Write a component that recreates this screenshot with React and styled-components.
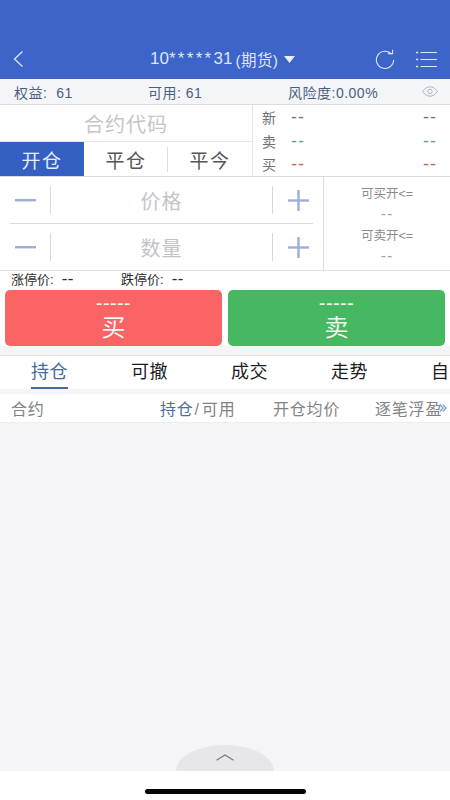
import React from 'react';
import styled, { createGlobalStyle } from 'styled-components';

const GlobalStyle = createGlobalStyle`
  html, body {
    margin: 0;
    padding: 0;
    background: #fff;
  }
  * {
    box-sizing: border-box;
  }
`;

const Page = styled.div`
  width: 450px;
  height: 800px;
  overflow: hidden;
  display: flex;
  flex-direction: column;
  font-family: 'Liberation Sans', 'Noto Sans CJK SC', sans-serif;
  background: #fff;
`;

const Header = styled.div`
  height: 79px;
  flex: none;
  background: #3c64c9;
  display: flex;
  align-items: flex-start;
  padding: 47px 13px 0 12px;
  color: #dfe6f6;
`;

const BackIcon = styled.svg`
  margin-top: 3px;
  flex: none;
`;

const HeaderTitle = styled.div`
  display: flex;
  align-items: center;
  font-size: 17px;
  height: 24px;
  margin-left: 125px;
  white-space: nowrap;
  small {
    font-size: 15.5px;
    letter-spacing: 0.4px;
    margin-left: 3px;
    margin-right: 6px;
  }
`;

const Stars = styled.span`
  letter-spacing: 2.3px;
`;

const HeaderIcons = styled.div`
  margin-left: auto;
  height: 24px;
  display: flex;
  align-items: center;
  gap: 21px;
`;

const InfoBar = styled.div`
  height: 26px;
  flex: none;
  background: #f4f5f9;
  border-bottom: 1px solid #dcdde2;
  display: grid;
  grid-template-columns: 134px 140px 1fr 24px;
  align-items: center;
  padding: 0 4px 0 14px;
  font-size: 14px;
  letter-spacing: 0.5px;
  color: #4a5f80;
  white-space: nowrap;
`;

const Top = styled.div`
  height: 72px;
  flex: none;
  display: flex;
  border-bottom: 1px solid #d9d9de;
`;

const TopLeft = styled.div`
  width: 253px;
  flex: none;
  display: flex;
  flex-direction: column;
  border-right: 1px solid #e4e4e8;
`;

const CodeInput = styled.div`
  height: 37px;
  flex: none;
  display: flex;
  align-items: center;
  justify-content: center;
  font-size: 20px;
  letter-spacing: 1px;
  color: #c6c6c9;
  border-bottom: 1px solid #e6e6ea;
`;

const ModeTabs = styled.div`
  flex: 1;
  display: grid;
  grid-template-columns: 84px 84px 1fr;
`;

const ModeTab = styled.div`
  display: flex;
  align-items: center;
  justify-content: center;
  font-size: 19px;
  letter-spacing: 1.5px;
  background: ${(p) => (p.$active ? '#3460c4' : '#fff')};
  color: ${(p) => (p.$active ? '#e8edf8' : '#555')};
  position: relative;
  &::after {
    content: '';
    display: ${(p) => (p.$divider ? 'block' : 'none')};
    position: absolute;
    right: 0;
    top: 5px;
    bottom: 4px;
    width: 1px;
    background: #dcdce0;
  }
`;

const Quotes = styled.div`
  flex: 1;
  padding: 1px 13px 1px 9px;
  display: flex;
  flex-direction: column;
  justify-content: space-between;
`;

const QuoteRow = styled.div`
  display: flex;
  align-items: center;
  height: 22px;
  font-size: 14px;
  color: #717175;
`;

const QuoteValue = styled.span`
  color: ${(p) => p.$color};
  font-size: 18px;
  line-height: 22px;
  letter-spacing: 1px;
  margin-left: ${(p) => (p.$first ? '15px' : 'auto')};
`;

const FormArea = styled.div`
  height: 94px;
  flex: none;
  display: flex;
  border-bottom: 1px solid #e2e2e6;
`;

const Steppers = styled.div`
  width: 324px;
  flex: none;
  display: flex;
  flex-direction: column;
  padding: 0 10px;
  border-right: 1px solid #dcdce0;
`;

const StepperRow = styled.div`
  flex: 1;
  display: grid;
  grid-template-columns: 41px 1fr 41px;
  align-items: center;
  border-bottom: ${(p) => (p.$last ? 'none' : '1px solid #d9d9de')};
`;

const StepButton = styled.div`
  display: flex;
  align-items: center;
  justify-content: center;
  height: 28px;
  padding-right: ${(p) => (p.$minus ? '10px' : '0')};
  padding-left: ${(p) => (p.$minus ? '0' : '10px')};
  border-right: ${(p) => (p.$minus ? '1px solid #d5d8e0' : 'none')};
  border-left: ${(p) => (p.$minus ? 'none' : '1px solid #d5d8e0')};
`;

const StepInput = styled.div`
  text-align: center;
  font-size: 20px;
  letter-spacing: 1px;
  color: #c4c4c8;
`;

const MaxPanel = styled.div`
  flex: 1;
  display: flex;
  flex-direction: column;
  align-items: center;
  padding-top: 8px;
  font-size: 12.5px;
  color: #8a8a8e;
`;

const MaxLabel = styled.div`
  height: 19px;
  line-height: 19px;
`;

const MaxValue = styled.div`
  height: 23px;
  line-height: 19px;
  font-size: 16px;
  letter-spacing: 1px;
  color: #a6a6aa;
`;

const Limits = styled.div`
  height: 19px;
  flex: none;
  display: flex;
  align-items: center;
  padding: 0 0 4px 11px;
  font-size: 13px;
  color: #2b2b2b;
`;

const LimitItem = styled.span`
  width: 110px;
  display: flex;
  align-items: center;
  b {
    font-weight: 400;
    font-size: 17px;
    line-height: 15px;
    margin-left: 8px;
    letter-spacing: 0.4px;
  }
`;

const Actions = styled.div`
  height: 56px;
  flex: none;
  display: grid;
  grid-template-columns: 1fr 1fr;
  gap: 6px;
  padding: 0 5px;
`;

const ActionButton = styled.div`
  border-radius: 5px;
  background: ${(p) => p.$color};
  color: #f3f6f3;
  display: flex;
  flex-direction: column;
  align-items: center;
`;

const ActionDash = styled.div`
  font-size: 20px;
  line-height: 14px;
  margin-top: 6px;
  letter-spacing: 0.4px;
`;

const ActionLabel = styled.div`
  font-size: 24px;
  line-height: 30px;
  margin-top: 3px;
`;

const Spacer = styled.div`
  height: 10px;
  flex: none;
  background: #f5f5f8;
  border-bottom: 1px solid #e3e3e7;
`;

const Tabs = styled.div`
  height: 33px;
  flex: none;
  display: flex;
  padding-left: 31px;
  gap: 63px;
  font-size: 18px;
  white-space: nowrap;
  overflow: hidden;
`;

const Tab = styled.div`
  height: 33px;
  line-height: 33px;
  flex: none;
  letter-spacing: 0.5px;
  color: ${(p) => (p.$active ? '#47689c' : '#1d1d1f')};
  border-bottom: ${(p) => (p.$active ? '2px solid #47689c' : 'none')};
`;

const TableHeader = styled.div`
  height: 34px;
  flex: none;
  background: #fff;
  border-top: 5px solid #f5f5f8;
  border-bottom: 1px solid #eeeef1;
  display: grid;
  grid-template-columns: 149px 113px 102px 1fr;
  align-items: center;
  padding-left: 11px;
  font-size: 16px;
  letter-spacing: 0.8px;
  color: #828286;
  white-space: nowrap;
  position: relative;
  em {
    font-style: normal;
    color: #4c6d9f;
  }
  i {
    font-style: normal;
    margin: 0 2px 0 1px;
  }
`;

const MoreArrow = styled.div`
  position: absolute;
  right: 3px;
  top: 9px;
  display: flex;
`;

const Body = styled.div`
  flex: 1;
  background: #f5f5f7;
  position: relative;
`;

const PullTab = styled.div`
  position: absolute;
  bottom: 0;
  left: 176px;
  width: 98px;
  height: 26px;
  background: #e7e7ea;
  border-radius: 49px 49px 0 0 / 26px 26px 0 0;
  display: flex;
  justify-content: center;
  padding-top: 9px;
`;

const Footer = styled.div`
  height: 29px;
  flex: none;
  background: #fff;
  padding-top: 18px;
  display: flex;
  justify-content: center;
`;

const HomeBar = styled.div`
  width: 161px;
  height: 5px;
  border-radius: 3px;
  background: #050505;
`;

const Minus = () => (
  <svg width="21" height="3" viewBox="0 0 21 3"><rect width="21" height="2.4" fill="#9cafd9" /></svg>
);

const Plus = () => (
  <svg width="21" height="21" viewBox="0 0 21 21">
    <rect y="9.3" width="21" height="2.4" fill="#9cafd9" />
    <rect x="9.3" width="2.4" height="21" fill="#9cafd9" />
  </svg>
);

const Stepper = ({ label, last }) => (
  <StepperRow $last={last}>
    <StepButton $minus><Minus /></StepButton>
    <StepInput>{label}</StepInput>
    <StepButton><Plus /></StepButton>
  </StepperRow>
);

const Quote = ({ label, color }) => (
  <QuoteRow>
    <span>{label}</span>
    <QuoteValue $first $color={color}>--</QuoteValue>
    <QuoteValue $color={color}>--</QuoteValue>
  </QuoteRow>
);

function App() {
  return (
    <Page>
      <GlobalStyle />
      <Header>
        <BackIcon width="13" height="18" viewBox="0 0 13 18" fill="none">
          <path d="M10.5 1.5 2.5 9l8 7.5" stroke="#dfe6f6" strokeWidth="1.3" />
        </BackIcon>
        <HeaderTitle>
          10<Stars>*****</Stars>31<small>(期货)</small>
          <svg width="11" height="7" viewBox="0 0 11 7"><path d="M0 0h11L5.5 7z" fill="#e8edf8" /></svg>
        </HeaderTitle>
        <HeaderIcons>
          <svg width="20" height="20" viewBox="0 0 20 20" fill="none">
            <path d="M16.5 5.2A8.6 8.6 0 1 0 18.6 11" stroke="#dfe6f6" strokeWidth="1.1" />
            <path d="M13 4.6h4.6V0.8" stroke="#dfe6f6" strokeWidth="1.1" />
          </svg>
          <svg width="21" height="17" viewBox="0 0 21 17" fill="none" stroke="#dfe6f6" strokeWidth="1.2">
            <path d="M4.5 1.5H21M4.5 8.5H21M4.5 15.5H21" />
            <path d="M0 1.5h2.2M0 8.5h2.2M0 15.5h2.2" strokeWidth="1.6" />
          </svg>
        </HeaderIcons>
      </Header>

      <InfoBar>
        <span>权益:{'\u00a0\u00a0'}61</span>
        <span>可用: 61</span>
        <span>风险度:0.00%</span>
        <svg width="16" height="11" viewBox="0 0 16 11" fill="none" stroke="#b4b6bc" strokeWidth="1">
          <path d="M.7 5.5C3 2 5.4.8 8 .8s5 1.2 7.3 4.7C13 9 10.6 10.2 8 10.2S3 9 .7 5.5z" />
          <circle cx="8" cy="5.5" r="2.2" />
        </svg>
      </InfoBar>

      <Top>
        <TopLeft>
          <CodeInput>合约代码</CodeInput>
          <ModeTabs>
            <ModeTab $active>开仓</ModeTab>
            <ModeTab $divider>平仓</ModeTab>
            <ModeTab>平今</ModeTab>
          </ModeTabs>
        </TopLeft>
        <Quotes>
          <Quote label="新" color="#777" />
          <Quote label="卖" color="#5aa68c" />
          <Quote label="买" color="#c0695c" />
        </Quotes>
      </Top>

      <FormArea>
        <Steppers>
          <Stepper label="价格" />
          <Stepper label="数量" last />
        </Steppers>
        <MaxPanel>
          <MaxLabel>可买开&lt;=</MaxLabel>
          <MaxValue>--</MaxValue>
          <MaxLabel>可卖开&lt;=</MaxLabel>
          <MaxValue>--</MaxValue>
        </MaxPanel>
      </FormArea>

      <Limits>
        <LimitItem>涨停价:<b>--</b></LimitItem>
        <LimitItem>跌停价:<b>--</b></LimitItem>
      </Limits>

      <Actions>
        <ActionButton $color="#fa6464">
          <ActionDash>-----</ActionDash>
          <ActionLabel>买</ActionLabel>
        </ActionButton>
        <ActionButton $color="#47b862">
          <ActionDash>-----</ActionDash>
          <ActionLabel>卖</ActionLabel>
        </ActionButton>
      </Actions>

      <Spacer />

      <Tabs>
        <Tab $active>持仓</Tab>
        <Tab>可撤</Tab>
        <Tab>成交</Tab>
        <Tab>走势</Tab>
        <Tab>自</Tab>
      </Tabs>

      <TableHeader>
        <span>合约</span>
        <span><em>持仓</em><i>/</i>可用</span>
        <span>开仓均价</span>
        <span>逐笔浮盈</span>
        <MoreArrow>
          <svg width="8" height="10" viewBox="0 0 8 10" fill="none" stroke="#7f9bd0" strokeWidth="1.3">
            <path d="M.8 1.5 4 5 .8 8.5M3.8 1.5 7 5 3.8 8.5" />
          </svg>
        </MoreArrow>
      </TableHeader>

      <Body>
        <PullTab>
          <svg width="18" height="7" viewBox="0 0 18 7" fill="none">
            <path d="M.5 6.3 9 1l8.5 5.3" stroke="#77777b" strokeWidth="1.1" />
          </svg>
        </PullTab>
      </Body>

      <Footer>
        <HomeBar />
      </Footer>
    </Page>
  );
}

export default App;
